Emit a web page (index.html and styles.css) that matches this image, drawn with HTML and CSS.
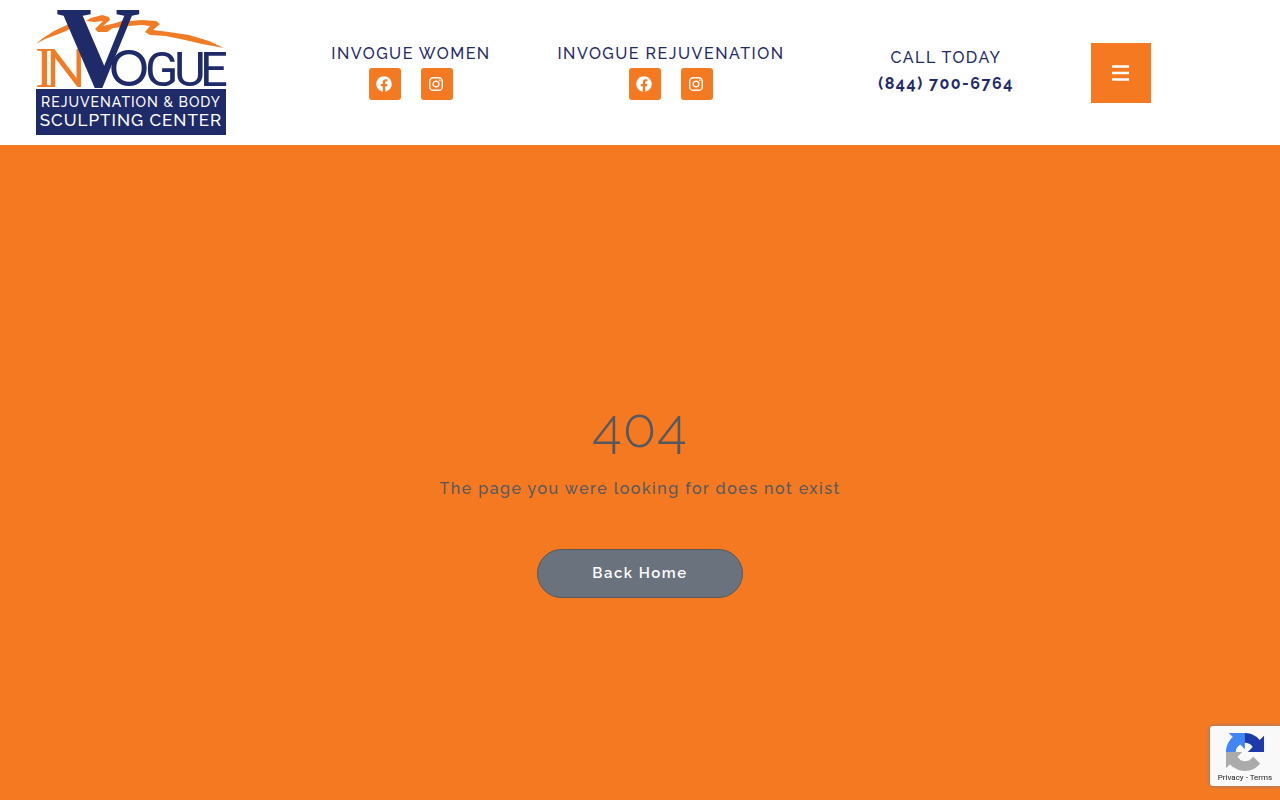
FILE: index.html
```html
<!DOCTYPE html>
<html lang="en">
<head>
  <meta charset="UTF-8" />
  <meta name="viewport" content="width=device-width, initial-scale=1.0" />
  <title>Page not found – InVogue</title>
  <link rel="stylesheet" href="styles.css">
</head>
<body>
  <!-- shared icons -->
  <svg class="sprite" aria-hidden="true">
    <symbol id="facebook" viewBox="0 0 512 512">
      <path fill="currentColor" d="M504 256C504 119 393 8 256 8S8 119 8 256c0 123.780 90.690 226.380 209.250 245V327.690h-63V256h63v-54.640c0-62.150 37-96.480 93.670-96.480 27.140 0 55.520 4.840 55.520 4.840v61h-31.280c-30.800 0-40.410 19.120-40.410 38.730V256h68.780l-11 71.690h-57.780V501C413.310 479.380 504 379.780 504 256z"/>
    </symbol>
    <symbol id="instagram" viewBox="0 0 16 16">
      <rect x="1.700" y="1.700" width="12.600" height="12.600" rx="3.600" fill="none" stroke="currentColor" stroke-width="1.400"/>
      <circle cx="8" cy="8" r="2.900" fill="none" stroke="currentColor" stroke-width="1.400"/>
      <circle cx="11.700" cy="4.300" r=".9" fill="currentColor"/>
    </symbol>
  </svg>

  <header class="site-header">
    <a class="logo" href="#" aria-label="InVogue Rejuvenation &amp; Body Sculpting Center">
      <svg viewBox="0 0 190 125" width="190" height="125">
        <g class="logo-stroke">
          <path d="M0 34L7 28L18 21L33 14L37 17L30 21L20 25L9 29Z"/>
          <path d="M50 11L55 8L66 5L73 7L74 10L67 16L80 13L88 10L87 17L77 18L71 22L62 22L59 19L67 11L58 12Z"/>
          <path d="M93 11L106 10L120 11L124 14L117 20L133 22L153 25L173 31L188 38L166 34L149 30L130 26L114 25L109 22L114 16L106 15L92 16Z"/>
        </g>
        <text class="logo-i" x="-1" y="77">I</text>
        <text class="logo-n" x="10" y="77">N</text>
        <text class="logo-v" x="20" y="76">V</text>
        <text class="logo-o" x="73" y="76">O</text>
        <text class="logo-gue" x="109 138 164" y="76">GUE</text>
        <rect class="logo-band" x="0" y="79" width="190" height="46"/>
        <text class="logo-line1" x="95" y="97" text-anchor="middle">REJUVENATION &amp; BODY</text>
        <text class="logo-line2" x="95" y="116" text-anchor="middle">SCULPTING CENTER</text>
      </svg>
    </a>

    <div class="social">
      <p>INVOGUE WOMEN</p>
      <div class="social-links">
        <a href="#" aria-label="Facebook"><svg><use href="#facebook"/></svg></a>
        <a href="#" aria-label="Instagram"><svg><use href="#instagram"/></svg></a>
      </div>
    </div>

    <div class="social">
      <p>INVOGUE REJUVENATION</p>
      <div class="social-links">
        <a href="#" aria-label="Facebook"><svg><use href="#facebook"/></svg></a>
        <a href="#" aria-label="Instagram"><svg><use href="#instagram"/></svg></a>
      </div>
    </div>

    <div class="call">
      <p>CALL TODAY</p>
      <a href="tel:8447006764">(844) 700-6764</a>
    </div>

    <button class="menu-toggle" type="button" aria-label="Menu">
      <svg viewBox="0 0 18 16" width="18" height="16">
        <path d="M0 1.500H17M0 8H17M0 14.500H17" stroke="currentColor" stroke-width="2.300"/>
      </svg>
    </button>
  </header>

  <main class="not-found">
    <h1>404</h1>
    <p>The page you were looking for does not exist</p>
    <a class="back-home" href="#">Back Home</a>
  </main>

  <aside class="recaptcha">
    <svg viewBox="0 0 64 64" width="38" height="38" aria-hidden="true">
      <path fill="#1c3aa9" d="M64 31.955l-.033-1.370V4.687l-7.160 7.160C50.948 4.674 42.033.093 32.050.093c-10.400 0-19.622 4.960-25.458 12.640l11.736 11.860a15.550 15.550 0 0 1 4.754-5.334c2.050-1.600 4.952-2.906 8.968-2.906.485 0 .860.057 1.135.163 4.976.393 9.288 3.140 11.828 7.124l-8.307 8.307L64 31.953"/>
      <path fill="#4285f4" d="M31.862.094l-1.370.033H4.594l7.160 7.160C4.580 13.147 0 22.060 0 32.046c0 10.400 4.960 19.622 12.640 25.458L24.500 45.768a15.550 15.550 0 0 1-5.334-4.754c-1.600-2.050-2.906-4.952-2.906-8.968 0-.485.057-.860.163-1.135.393-4.976 3.140-9.288 7.124-11.828l8.307 8.307L31.860.095"/>
      <path fill="#ababab" d="M.001 32.045l.033 1.370v25.898l7.160-7.160c5.860 7.173 14.774 11.754 24.760 11.754 10.400 0 19.622-4.960 25.458-12.640l-11.736-11.860a15.550 15.550 0 0 1-4.754 5.334c-2.050 1.600-4.952 2.906-8.968 2.906-.485 0-.860-.057-1.135-.163-4.976-.393-9.288-3.140-11.828-7.124l8.307-8.307c-10.522.040-22.400.066-27.295-.005"/>
    </svg>
    <p><a href="#">Privacy</a> - <a href="#">Terms</a></p>
  </aside>
</body>
</html>
```
FILE: styles.css
```css
* {
  box-sizing: border-box;
}
body {
  margin: 0;
  min-height: 100vh;
  display: flex;
  flex-direction: column;
  font-family: Raleway, Lato, sans-serif;
  font-size: 16px;
  font-weight: 500;
  line-height: 26px;
  letter-spacing: 1.5px;
  color: #54595f;
  background-color: #f57921;
}
p, h1 {
  margin: 0;
}
a {
  color: inherit;
  text-decoration: none;
}
.sprite {
  display: none;
}
.site-header {
  display: grid;
  grid-template-columns: 281fr 260fr 260fr 290fr 189fr;
  align-items: center;
  padding: 10px 0;
  background-color: #fff;
  color: #1f2a69;
  text-align: center;
}
.logo {
  margin-left: 36px;
  text-align: left;
  letter-spacing: 0;
}
.logo svg {
  display: block;
  overflow: visible;
}
.logo-stroke {
  fill: #f07d26;
}
.logo-i {
  font: 56px "Liberation Serif", serif;
  fill: #f07d26;
}
.logo-n {
  font: 52px Lato, sans-serif;
  fill: #f07d26;
}
.logo-v {
  font: bold 117px "Liberation Serif", serif;
  fill: #1f2a69;
}
.logo-o {
  font: 50px Lato, sans-serif;
  fill: #1f2a69;
}
.logo-gue {
  font: 49px Roboto, sans-serif;
  fill: #1f2a69;
}
.logo-band {
  fill: #1f2a69;
}
.logo-line1 {
  font: 500 14px Raleway, Lato, sans-serif;
  letter-spacing: 1px;
  fill: #fff;
}
.logo-line2 {
  font: 500 17px Raleway, Lato, sans-serif;
  letter-spacing: 1px;
  fill: #fff;
}
.social {
  padding-bottom: 4px;
}
.social-links {
  display: flex;
  justify-content: center;
  gap: 20px;
  padding-top: 1px;
}
.social-links a {
  display: flex;
  align-items: center;
  justify-content: center;
  width: 32px;
  height: 32px;
  padding-right: 2px;
  border-radius: 3px;
  background-color: #f57921;
  color: #fff;
}
.social-links svg {
  width: 16px;
  height: 16px;
}
.call {
  padding-bottom: 4px;
}
.call a {
  font-weight: 700;
}
.menu-toggle {
  display: flex;
  align-items: center;
  justify-content: center;
  width: 60px;
  height: 60px;
  padding: 0;
  border: 0;
  background-color: #f57921;
  color: #fff;
  cursor: pointer;
}
.not-found {
  flex: 1;
  display: flex;
  flex-direction: column;
  align-items: center;
  padding: 247px 20px 40px;
  text-align: center;
}
.not-found h1 {
  font-size: 55px;
  font-weight: 300;
  line-height: 72px;
  letter-spacing: 1px;
}
.not-found p {
  margin-top: 12px;
}
.back-home {
  margin-top: 47px;
  padding: 11px 54px;
  border: 1px solid #54595f;
  border-radius: 25px;
  background-color: #69727d;
  color: #fff;
  font-size: 15px;
  font-weight: 600;
  line-height: 25px;
}
.back-home:hover {
  background-color: #54595f;
}
.recaptcha {
  position: fixed;
  right: 0;
  bottom: 14px;
  display: flex;
  flex-direction: column;
  align-items: center;
  width: 70px;
  height: 60px;
  padding-top: 7px;
  border-radius: 3px 0 0 3px;
  background-color: #f9f9f9;
  box-shadow: 0 0 5px gray;
  color: #222;
}
.recaptcha p {
  font: 8px/14px Roboto, sans-serif;
  letter-spacing: 0;
  white-space: nowrap;
}
```
